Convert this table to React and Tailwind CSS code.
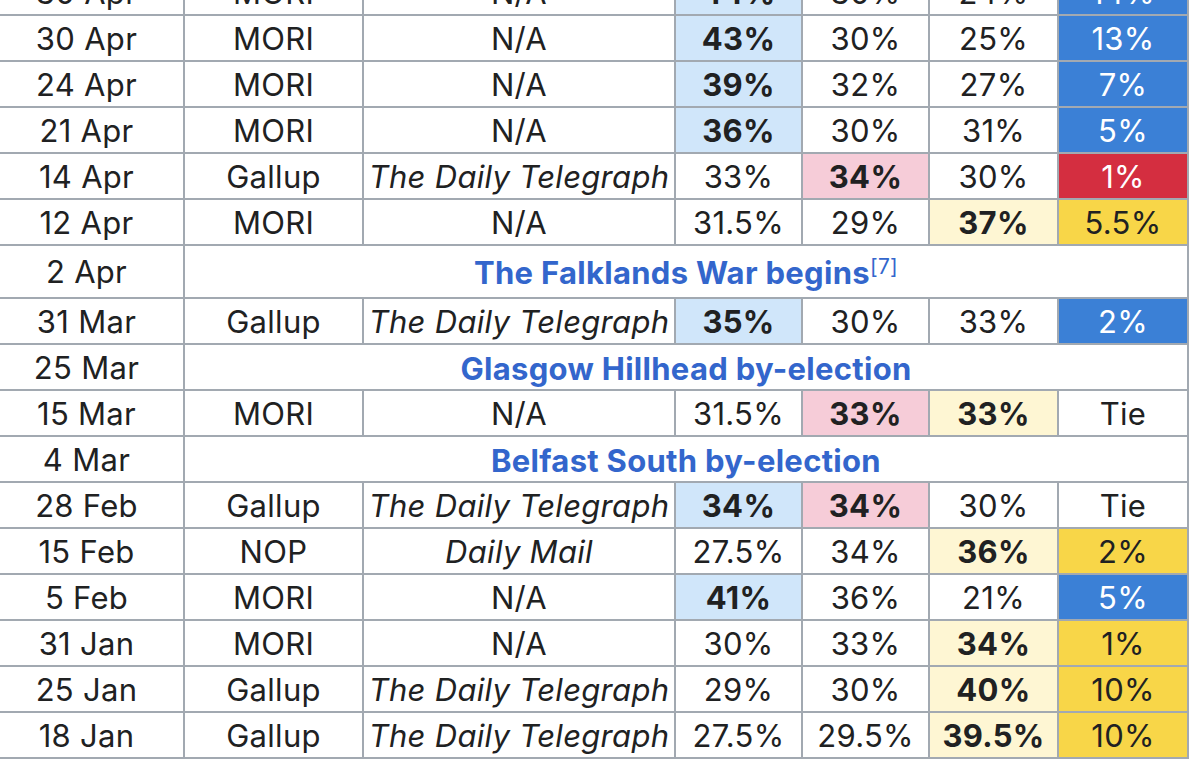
import React from 'react';

const tone = {
  con: 'bg-[#d0e6fa] font-bold',
  lab: 'bg-[#f6ccd8] font-bold',
  all: 'bg-[#fef6d3] font-bold',
  conLead: 'bg-[#3b80d6] text-white',
  labLead: 'bg-[#d42e40] text-white',
  allLead: 'bg-[#f8d648]',
};

// each value is [text, tone]
const rows = [
  { date: '30 Apr', pollster: 'MORI', client: 'N/A', vals: [['44%', 'con'], ['30%'], ['24%'], ['14%', 'conLead']] },
  { date: '30 Apr', pollster: 'MORI', client: 'N/A', vals: [['43%', 'con'], ['30%'], ['25%'], ['13%', 'conLead']] },
  { date: '24 Apr', pollster: 'MORI', client: 'N/A', vals: [['39%', 'con'], ['32%'], ['27%'], ['7%', 'conLead']] },
  { date: '21 Apr', pollster: 'MORI', client: 'N/A', vals: [['36%', 'con'], ['30%'], ['31%'], ['5%', 'conLead']] },
  { date: '14 Apr', pollster: 'Gallup', client: 'The Daily Telegraph', italic: true, vals: [['33%'], ['34%', 'lab'], ['30%'], ['1%', 'labLead']] },
  { date: '12 Apr', pollster: 'MORI', client: 'N/A', vals: [['31.5%'], ['29%'], ['37%', 'all'], ['5.5%', 'allLead']] },
  { date: '2 Apr', event: 'The Falklands War begins', ref: '[7]' },
  { date: '31 Mar', pollster: 'Gallup', client: 'The Daily Telegraph', italic: true, vals: [['35%', 'con'], ['30%'], ['33%'], ['2%', 'conLead']] },
  { date: '25 Mar', event: 'Glasgow Hillhead by-election' },
  { date: '15 Mar', pollster: 'MORI', client: 'N/A', vals: [['31.5%'], ['33%', 'lab'], ['33%', 'all'], ['Tie']] },
  { date: '4 Mar', event: 'Belfast South by-election' },
  { date: '28 Feb', pollster: 'Gallup', client: 'The Daily Telegraph', italic: true, vals: [['34%', 'con'], ['34%', 'lab'], ['30%'], ['Tie']] },
  { date: '15 Feb', pollster: 'NOP', client: 'Daily Mail', italic: true, vals: [['27.5%'], ['34%'], ['36%', 'all'], ['2%', 'allLead']] },
  { date: '5 Feb', pollster: 'MORI', client: 'N/A', vals: [['41%', 'con'], ['36%'], ['21%'], ['5%', 'conLead']] },
  { date: '31 Jan', pollster: 'MORI', client: 'N/A', vals: [['30%'], ['33%'], ['34%', 'all'], ['1%', 'allLead']] },
  { date: '25 Jan', pollster: 'Gallup', client: 'The Daily Telegraph', italic: true, vals: [['29%'], ['30%'], ['40%', 'all'], ['10%', 'allLead']] },
  { date: '18 Jan', pollster: 'Gallup', client: 'The Daily Telegraph', italic: true, vals: [['27.5%'], ['29.5%'], ['39.5%', 'all'], ['10%', 'allLead']] },
];

const cell = 'flex items-center justify-center h-[44px] whitespace-nowrap';

export default function App() {
  return (
    <div
      className="w-[1199px] h-[777px] overflow-hidden bg-white text-[#202122] text-[31px] tracking-[0.3px] leading-none"
      style={{ fontFamily: 'Inter, "Noto Sans", "Liberation Sans", sans-serif' }}
    >
      <div className="ml-[-12px] mt-[-32px] w-fit grid grid-cols-[193px_177px_310px_125px_125px_127px_128px] gap-[2px] p-[2px] bg-[#a2a9b1]">
        {rows.map((r, i) => {
          const tall = r.ref ? 'h-[51px]' : 'h-[44px]';
          return r.event ? (
            <React.Fragment key={i}>
              <div className={`${cell} ${tall} bg-white`}>{r.date}</div>
              <div className={`col-span-6 flex items-center justify-center bg-white ${tall}`}>
                <span className="font-bold text-[#3366cc] pt-[2px]">
                  {r.event}
                  {r.ref && <sup className="font-normal text-[21px]">{r.ref}</sup>}
                </span>
              </div>
            </React.Fragment>
          ) : (
            <React.Fragment key={i}>
              <div className={`${cell} bg-white`}>{r.date}</div>
              <div className={`${cell} bg-white`}>{r.pollster}</div>
              <div className={`${cell} bg-white ${r.italic ? 'italic' : ''}`}>{r.client}</div>
              {r.vals.map(([v, t], j) => (
                <div key={j} className={`${cell} ${t ? tone[t] : 'bg-white'}`}>{v}</div>
              ))}
            </React.Fragment>
          );
        })}
      </div>
    </div>
  );
}
